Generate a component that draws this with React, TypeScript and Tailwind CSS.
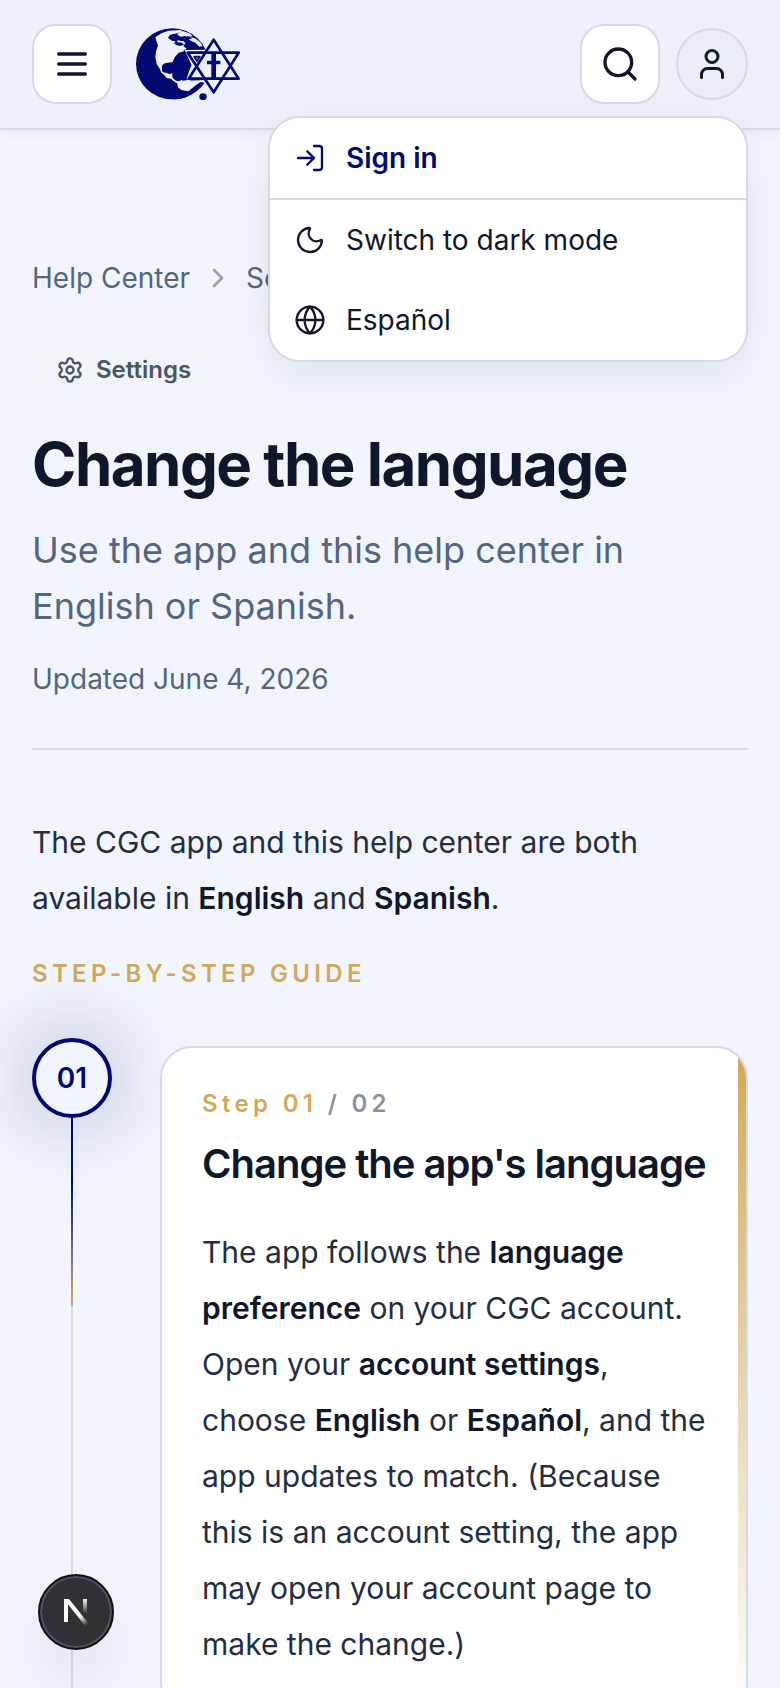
import type { ReactNode } from "react";
import {
  ChevronRight,
  Globe,
  LogIn,
  Moon,
  Search,
  Settings,
  User,
} from "lucide-react";

function Logo() {
  return (
    <svg
      viewBox="48 38 312 219"
      className="w-26"
      fill="#000a70"
      role="img"
      aria-label="CGC"
    >
      <ellipse cx="157" cy="145.5" rx="109" ry="106.5" />
      <g fill="#eef0fb">
        <path d="M106 66l18-12 22-8 34-2 10 4-18 6-22 4-6 10 12 8 10 2-4 8 10 10 16 4 4 8-16 4-12 14-6 14-12 2-10 8-4 10 6 12 10 4 8-2 2 14 10 8 12 2 14 6-10 2-16-4-16-12-12-2-8-10-8-6-6-14-8-12-4-20 2-18 6-18-4-10Z" />
        <path d="M176 52l14-4 18 6 10 8-14 4-10-4-12 2-10-6Z" />
        <path d="M212 66l12 2 16 12 8 12-10 2-12-12-14-6-6-6Z" />
        <path d="M174 72l14 2 8 10-6 8 10 8-10 6-12-6-14-2-6-10 12-4Z" />
        <path d="M171 202l16-10h16l10 6 38-4 8 14-10 24-14 18h-20l-5-6 6-14-20-4-12-2-10-8Z" />
        <path d="M194 104l64-1 23-40 84 40v94l-84 44-28-46-62 1 24-46Z" />
      </g>
      <path d="M156 64l14 4 16-2 8 8-8 4-14-4-8 2-14-8ZM200 62l10 2 6 6-12 2Z" />
      <path d="M168 80l18 2 6 6-12 4-14-4Z" />
      <path d="M126 152c4-8 16-12 28-8l10 6 10-12 14-2 12 10 12 6-12 38 4 4-16 2-8-8-10 4-8-6 2-10-8-6-6-8-10 2-4 10-10-6Z" />
      <path d="M170 252c36-4 66-24 84-50l-12-2c-14 8-28 22-44 32l-28 12-12 8Z" />
      <g fill="none" stroke="#000a70" strokeWidth="8" strokeLinejoin="round">
        <path d="M281 73L206 190h150Z" />
        <path d="M281 231L203 112h153Z" />
        <path d="M223 124h16l-8 13Z" strokeWidth="6" />
      </g>
      <path d="M274 112h14v78h-14ZM261 136h40v11h-40Z" />
      <ellipse cx="249" cy="244" rx="11" ry="10" />
    </svg>
  );
}

function MenuIcon() {
  return (
    <svg
      viewBox="0 0 24 24"
      className="size-10"
      fill="none"
      stroke="currentColor"
      strokeWidth="2"
      strokeLinecap="round"
      aria-hidden
    >
      <path d="M4 6h16M4 12h16M4 18h16" />
    </svg>
  );
}

function Header() {
  return (
    <header className="relative z-10 flex shrink-0 items-center justify-between border-b-2 border-[#d3dbe8] bg-[#eef0fb] px-8 py-6 shadow-[0_2px_12px_rgba(15,23,42,0.06)]">
      <div className="flex items-center gap-6">
        <button
          aria-label="Open menu"
          className="flex size-20 items-center justify-center rounded-3xl border-2 border-[#d3dbe8] bg-white"
        >
          <MenuIcon />
        </button>
        <a href="#home">
          <Logo />
        </a>
      </div>

      <div className="flex items-center gap-4">
        <button
          aria-label="Search"
          className="flex size-20 items-center justify-center rounded-3xl border-2 border-[#d3dbe8] bg-white"
        >
          <Search className="size-10" />
        </button>
        <button
          aria-label="Account"
          aria-expanded="true"
          className="flex size-18 items-center justify-center rounded-full border-2 border-[#d3dbe8] bg-[#e9eef7]"
        >
          <User className="size-9" />
        </button>
      </div>

      <AccountMenu />
    </header>
  );
}

function AccountMenu() {
  return (
    <div
      role="menu"
      className="absolute top-29 right-8 w-120 overflow-hidden rounded-4xl border-2 border-[#d3dbe8] bg-white text-[28px] shadow-[0_16px_48px_rgba(15,23,42,0.07)]"
    >
      <a
        href="#sign-in"
        role="menuitem"
        className="box-content flex h-20 items-center gap-5 border-b-2 border-[#d3dbe8] px-6 font-semibold text-[#000a70]"
      >
        <LogIn className="size-8" strokeWidth={1.75} />
        Sign in
      </a>
      <button
        role="menuitem"
        className="flex h-20 w-full items-center gap-5 px-6"
      >
        <Moon className="size-8" strokeWidth={1.75} />
        Switch to dark mode
      </button>
      <button
        role="menuitem"
        className="flex h-20 w-full items-center gap-5 px-6"
      >
        <Globe className="size-8" strokeWidth={1.75} />
        Español
      </button>
    </div>
  );
}

function Strong({ children }: { children: ReactNode }) {
  return <strong className="font-semibold text-[#0f172a]">{children}</strong>;
}

function ArticleHeader() {
  return (
    <div className="border-b-2 border-[#d3dbe8] pb-12">
      <nav
        aria-label="Breadcrumb"
        className="flex items-center gap-3 text-[28px] leading-10 text-[#54657e]"
      >
        <a href="#help">Help Center</a>
        <ChevronRight className="size-8 text-[#9a9fae]" />
        <a href="#settings">Settings</a>
      </nav>

      <a
        href="#settings"
        className="mt-12 inline-flex items-center gap-3 rounded-full bg-[#f1f4f8] px-6 py-2 align-top text-2xl font-semibold text-[#4b5563]"
      >
        <Settings className="size-7" />
        Settings
      </a>

      <h1 className="mt-8 text-6xl leading-[76px] font-bold tracking-tight">
        Change the language
      </h1>
      <p className="mt-5 text-4xl leading-14 text-[#54657e]">
        Use the app and this help center in English or Spanish.
      </p>
      <p className="mt-6 text-[28px] leading-[42px] text-[#54657e]">
        Updated June 4, 2026
      </p>
    </div>
  );
}

function Step() {
  return (
    <li className="flex gap-12">
      <div className="flex w-20 shrink-0 flex-col items-center">
        <div className="flex size-20 shrink-0 items-center justify-center rounded-full border-4 border-[#000a70] bg-[#f2f5fd] text-[28px] font-semibold text-[#000a70] shadow-[0_0_80px_8px_rgba(15,30,90,0.24)]">
          01
        </div>
        <div className="w-0.5 grow bg-[#d3dbe8]">
          <div className="h-47 bg-linear-to-b from-[#000a70] from-35% via-[#5c6270] via-65% to-[#d4ad52]" />
        </div>
      </div>

      <article className="mt-2 flex min-w-0 grow overflow-hidden rounded-4xl border-2 border-[#d3dbe8] bg-white">
        <div className="grow py-10 pl-10">
          <p className="text-2xl font-semibold tracking-[0.18em] text-[#d0aa5a]">
            Step 01 <span className="text-[#8a92a1]">/ 02</span>
          </p>
          <h3 className="mt-4 text-[40px] leading-14 font-semibold tracking-tight">
            Change the app's language
          </h3>
          <p className="mt-8 pr-8 text-[30px] leading-14 text-[#252d40]">
            The app follows the <Strong>language preference</Strong> on your CGC
            account. Open your <Strong>account settings</Strong>, choose{" "}
            <Strong>English</Strong> or <Strong>Español</Strong>, and the app
            updates to match. (Because this is an account setting, the app may
            open your account page to make the change.)
          </p>
        </div>
        <div className="w-2 shrink-0 bg-linear-to-b from-[#d0aa52] to-white" />
      </article>
    </li>
  );
}

function DevToolsBadge() {
  return (
    <button
      aria-label="Open dev tools"
      className="fixed bottom-[38px] left-[38px] z-20 flex size-19 items-center justify-center rounded-full border-2 border-[#111113] bg-[#323034] shadow-[inset_0_0_0_2px_#4c5563,0_32px_64px_rgba(15,23,42,0.08)]"
    >
      <svg viewBox="0 0 26 30" className="h-[30px] w-[26px]" aria-hidden>
        <defs>
          <linearGradient id="diagonal" x1="14" y1="15" x2="24" y2="28" gradientUnits="userSpaceOnUse">
            <stop stopColor="#fff" />
            <stop offset="0.3" stopColor="#fff" />
            <stop offset="1" stopColor="#fff" stopOpacity="0" />
          </linearGradient>
          <linearGradient id="stem" x1="22" y1="1" x2="22" y2="17" gradientUnits="userSpaceOnUse">
            <stop stopColor="#fff" />
            <stop offset="1" stopColor="#fff" stopOpacity="0" />
          </linearGradient>
        </defs>
        <rect x="1" y="2" width="4" height="23" fill="#fff" />
        <path d="M1 2h5l20 25-3 3L4 6Z" fill="url(#diagonal)" />
        <rect x="20" y="2" width="4" height="17" fill="url(#stem)" />
      </svg>
    </button>
  );
}

export default function App() {
  return (
    <div className="flex h-screen flex-col bg-[#f2f5fd] font-['Inter',sans-serif] text-[#0f172a]">
      <Header />

      <main className="grow overflow-y-auto px-8 pt-32 pb-16 [scrollbar-width:none]">
        <ArticleHeader />

        <p className="mt-16 text-[30px] leading-14 text-[#252d40]">
          The CGC app and this help center are both available in{" "}
          <Strong>English</Strong> and <Strong>Spanish</Strong>.
        </p>

        <h2 className="mt-8 text-2xl font-semibold tracking-[0.18em] text-[#d0aa5a] uppercase">
          Step-by-step guide
        </h2>

        <ol className="mt-12">
          <Step />
        </ol>
      </main>

      <DevToolsBadge />
    </div>
  );
}
